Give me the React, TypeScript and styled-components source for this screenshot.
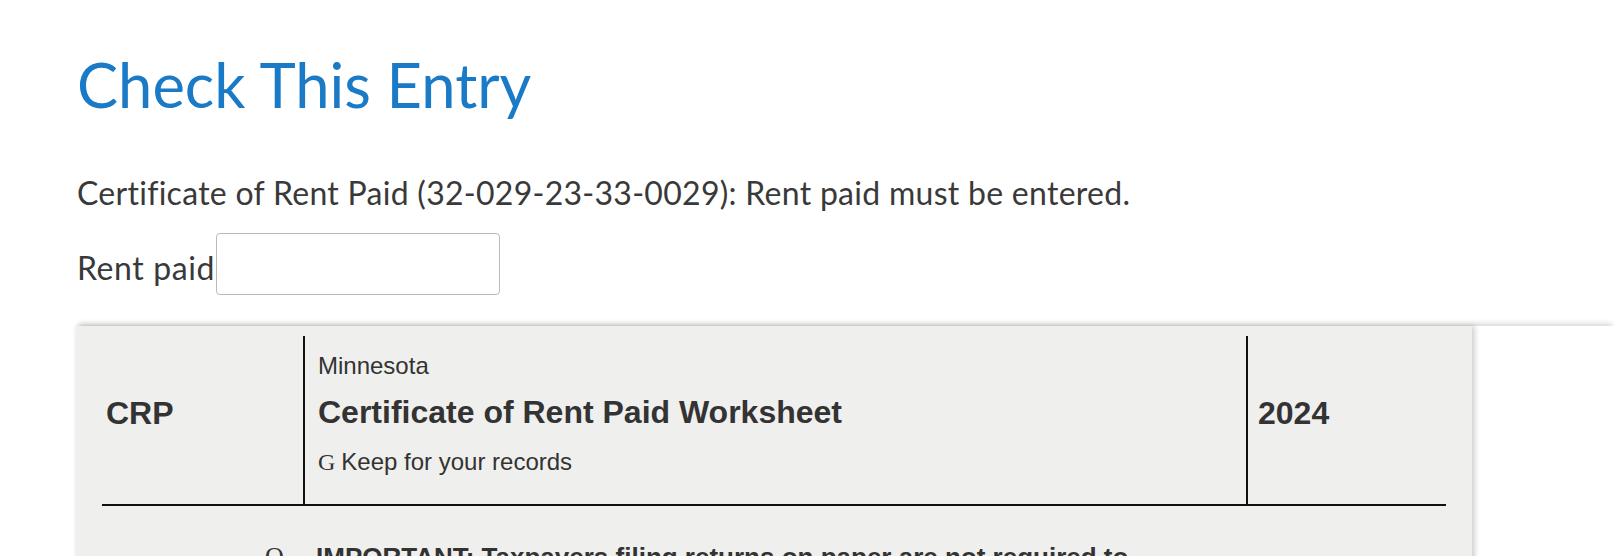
import styled, { createGlobalStyle } from 'styled-components'

const GlobalStyle = createGlobalStyle`
html, body {
margin: 0;
padding: 0;
background: #ffffff;
overflow: hidden;
}
`

const Page = styled.div`
height: 556px;
overflow: hidden;
padding-left: 77px;
font-family: Lato, "Open Sans", sans-serif;
color: #393939;
`

const Title = styled.h1`
margin: 47px 0 0 0;
font-size: 61.5px;
line-height: 74px;
font-weight: 400;
color: #1a7ac6;
`

const Message = styled.p`
margin: 53px 0 0 0;
font-size: 32px;
line-height: 38px;
letter-spacing: 0.28px;
`

const FieldRow = styled.div`
display: flex;
align-items: flex-end;
margin-top: 21px;
`

const FieldLabel = styled.label`
font-size: 32px;
line-height: 38px;
letter-spacing: 0.6px;
margin-bottom: 8px;
`

const AmountInput = styled.input`
box-sizing: border-box;
width: 284px;
height: 62px;
margin: 0 0 0 1px;
border: 1px solid #b9b9b9;
border-radius: 4px;
background: #ffffff;
font-family: Lato, sans-serif;
font-size: 24px;
padding: 0 10px;
`

const Viewer = styled.div`
margin: 31px 0 0 -1px;
box-shadow: 0 -4px 6px -2px rgba(0, 0, 0, 0.18);
`

const Sheet = styled.div`
width: 1396px;
box-sizing: border-box;
padding: 10px 26px 0 26px;
background: #efefee;
box-shadow: 3px 0 5px rgba(0, 0, 0, 0.18);
font-family: "Liberation Sans", Arial, sans-serif;
color: #333333;
min-height: 240px;
`

const FormHeader = styled.div`
display: grid;
grid-template-columns: 201px 943px 200px;
border-bottom: 2px solid #111111;
`

const Cell = styled.div<{ $divider?: boolean; $pad: string }>`
padding: ${({ $pad }) => $pad};
border-left: ${({ $divider }) => ($divider ? '2px solid #111111' : 'none')};
`

const FormCode = styled.div`
font-size: 32px;
line-height: 40px;
font-weight: 700;
`

const Agency = styled.div`
font-size: 24px;
line-height: 30px;
`

const FormTitle = styled.div`
margin: 11px 0 15px 0;
font-size: 32px;
line-height: 40px;
font-weight: 700;
`

const Note = styled.div`
font-size: 24px;
line-height: 30px;
`

const Bullet = styled.span`
font-family: "Liberation Serif", "Times New Roman", serif;
margin-right: 6px;
`

const ImportantRow = styled.div`
display: flex;
padding: 35px 0 0 163px;
font-size: 26px;
line-height: 32px;
font-weight: 700;
`

const Glyph = styled.span`
width: 51px;
flex: none;
font-family: "Liberation Serif", "Times New Roman", serif;
font-weight: 400;
`

const App: React.FC = () => {
    return (
        <>
            <GlobalStyle />
            <Page>
                <Title>Check This Entry</Title>
                <Message>Certificate of Rent Paid (32-029-23-33-0029): Rent paid must be entered.</Message>
                <FieldRow>
                    <FieldLabel htmlFor="rent-paid">Rent paid</FieldLabel>
                    <AmountInput id="rent-paid" type="text" />
                </FieldRow>
                <Viewer>
                    <Sheet>
                        <FormHeader>
                            <Cell $pad="57px 0 0 4px">
                                <FormCode>CRP</FormCode>
                            </Cell>
                            <Cell $divider $pad="15px 0 27px 13px">
                                <Agency>Minnesota</Agency>
                                <FormTitle>Certificate of Rent Paid Worksheet</FormTitle>
                                <Note><Bullet>G</Bullet>Keep for your records</Note>
                            </Cell>
                            <Cell $divider $pad="57px 0 0 10px">
                                <FormCode>2024</FormCode>
                            </Cell>
                        </FormHeader>
                        <ImportantRow>
                            <Glyph>Q</Glyph>
                            <span>IMPORTANT: Taxpayers filing returns on paper are not required to</span>
                        </ImportantRow>
                    </Sheet>
                </Viewer>
            </Page>
        </>
    )
}

export default App
